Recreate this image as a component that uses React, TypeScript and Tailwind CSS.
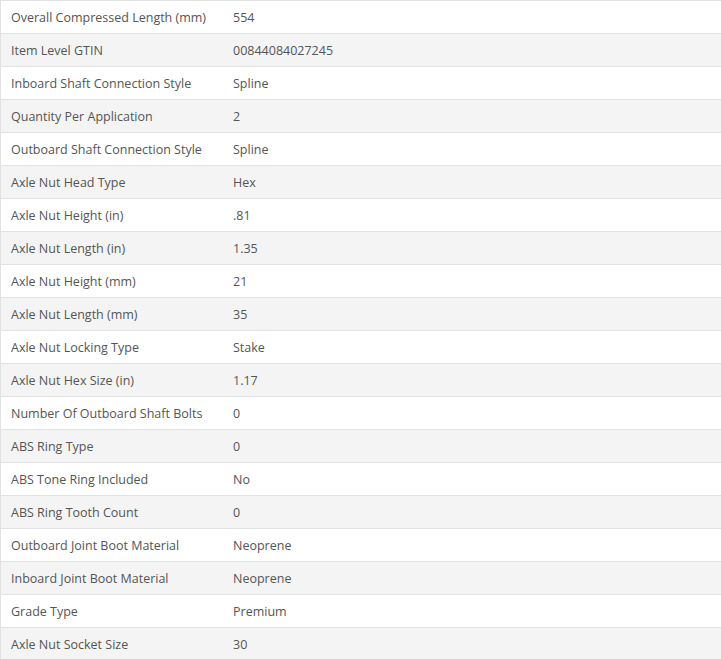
const specs: [string, string][] = [
  ["Overall Compressed Length (mm)", "554"],
  ["Item Level GTIN", "00844084027245"],
  ["Inboard Shaft Connection Style", "Spline"],
  ["Quantity Per Application", "2"],
  ["Outboard Shaft Connection Style", "Spline"],
  ["Axle Nut Head Type", "Hex"],
  ["Axle Nut Height (in)", ".81"],
  ["Axle Nut Length (in)", "1.35"],
  ["Axle Nut Height (mm)", "21"],
  ["Axle Nut Length (mm)", "35"],
  ["Axle Nut Locking Type", "Stake"],
  ["Axle Nut Hex Size (in)", "1.17"],
  ["Number Of Outboard Shaft Bolts", "0"],
  ["ABS Ring Type", "0"],
  ["ABS Tone Ring Included", "No"],
  ["ABS Ring Tooth Count", "0"],
  ["Outboard Joint Boot Material", "Neoprene"],
  ["Inboard Joint Boot Material", "Neoprene"],
  ["Grade Type", "Premium"],
  ["Axle Nut Socket Size", "30"],
];

export default function App() {
  return (
    <div className="h-[659px] w-[721px] overflow-hidden bg-white font-['Open_Sans',sans-serif] text-[12.5px] text-[#555]">
      <div className="border-l border-[#e2e2e2]">
        {specs.map(([label, value], i) => (
          <div
            key={label}
            className={`flex h-[33px] items-center border-t border-[#e2e2e2] pt-[2px] ${i % 2 === 1 ? "bg-[#f4f4f4]" : "bg-white"}`}
          >
            <div className="w-[222px] shrink-0 pl-[10px]">{label}</div>
            <div className="pl-[10px]">{value}</div>
          </div>
        ))}
      </div>
    </div>
  );
}
